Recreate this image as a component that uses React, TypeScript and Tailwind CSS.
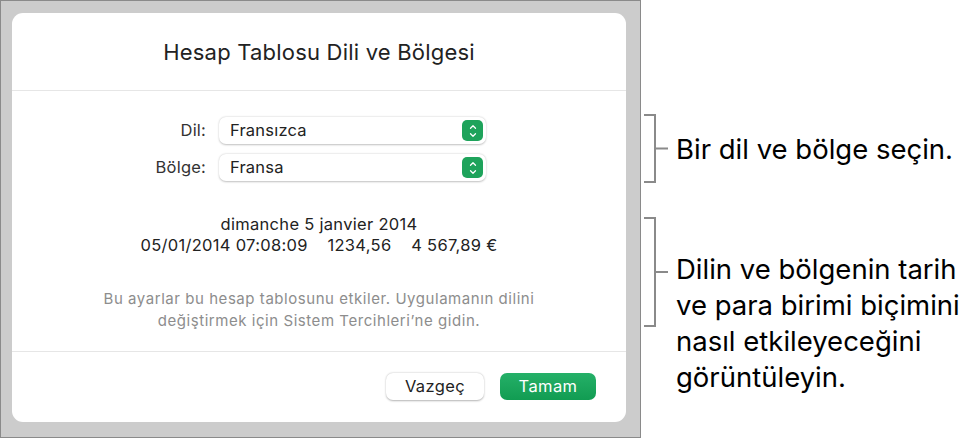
import { ChevronUp, ChevronDown } from 'lucide-react';

function Stepper() {
  return (
    <div className="w-[21px] h-[21px] rounded-[5px] bg-[#1ea35b] flex flex-col items-center justify-center">
      <ChevronUp className="w-[10px] h-[10px] text-white -mb-[1px]" strokeWidth={3} />
      <ChevronDown className="w-[10px] h-[10px] text-white -mt-[1px]" strokeWidth={3} />
    </div>
  );
}

function SelectRow({ label, value }: { label: string; value: string }) {
  return (
    <div className="flex items-center">
      <div className="w-[207px] pr-[13px] text-right text-[16.5px] tracking-[0.2px] text-[#333]">{label}</div>
      <div className="w-[267px] h-[27px] rounded-[7px] bg-white shadow-[0_0.5px_2px_rgba(0,0,0,0.25)] flex items-center pl-[11px] pr-[3px]">
        <span className="flex-1 text-[16.5px] tracking-[0.2px] text-[#222]">{value}</span>
        <Stepper />
      </div>
    </div>
  );
}

function Bracket({ height }: { height: number }) {
  return (
    <svg width="26" height={height + 4} className="shrink-0">
      <path
        d={`M 1 2 H 12 V ${height + 2} H 1 M 12 ${height / 2 + 2} H 25`}
        fill="none"
        stroke="#8a8a8a"
        strokeWidth="2"
      />
    </svg>
  );
}

export default function App() {
  return (
    <div className="w-[969px] h-[438px] bg-white flex font-['Inter',sans-serif]">
      {/* Screenshot panel */}
      <div className="w-[641px] h-[438px] bg-[#cccccc] border border-[#8a8a8a] pt-[12px] pl-[11px]">
        <div className="w-[614px] h-[409px] bg-white rounded-[11px] flex flex-col">
          <div className="h-[78px] flex items-center justify-center border-b border-[#e6e6e6]">
            <h1 className="text-[22px] tracking-[0.2px] text-[#222] pt-[2px]">Hesap Tablosu Dili ve Bölgesi</h1>
          </div>

          <div className="flex-1 flex flex-col border-b border-[#e6e6e6]">
            <div className="flex flex-col gap-[10px] pt-[26px]">
              <SelectRow label="Dil:" value="Fransızca" />
              <SelectRow label="Bölge:" value="Fransa" />
            </div>
            <div className="flex flex-col items-center text-[16.5px] tracking-[0.3px] text-[#222] leading-[21px] mt-[33px]">
              <div>dimanche 5 janvier 2014</div>
              <div className="whitespace-pre">05/01/2014 07:08:09    1234,56    4 567,89 €</div>
            </div>
            <div className="flex flex-col items-center text-[15px] tracking-[0.55px] text-[#8d8d8d] leading-[22px] mt-[32px]">
              <div>Bu ayarlar bu hesap tablosunu etkiler. Uygulamanın dilini</div>
              <div>değiştirmek için Sistem Tercihleri’ne gidin.</div>
            </div>
          </div>

          <div className="h-[70px] flex items-center justify-end gap-[16px] pr-[30px] pb-[2px]">
            <button className="w-[98px] h-[27px] rounded-[7px] bg-white shadow-[0_0.5px_2px_rgba(0,0,0,0.3)] text-[16.5px] tracking-[0.4px] text-[#222]">
              Vazgeç
            </button>
            <button className="w-[96px] h-[27px] rounded-[7px] bg-gradient-to-b from-[#24b068] to-[#119c52] text-[16.5px] tracking-[0.4px] text-white">
              Tamam
            </button>
          </div>
        </div>
      </div>

      {/* Annotations */}
      <div className="flex-1 flex flex-col pl-[2px] text-[27.5px] text-black leading-[36px]">
        <div className="flex items-center mt-[113px]">
          <Bracket height={67} />
          <div className="pl-[7px]">Bir dil ve bölge seçin.</div>
        </div>
        <div className="flex items-start mt-[32px]">
          <Bracket height={108} />
          <div className="pl-[7px] mt-[35px] whitespace-nowrap">
            Dilin ve bölgenin tarih
            <br />
            ve para birimi biçimini
            <br />
            nasıl etkileyeceğini
            <br />
            görüntüleyin.
          </div>
        </div>
      </div>
    </div>
  );
}
